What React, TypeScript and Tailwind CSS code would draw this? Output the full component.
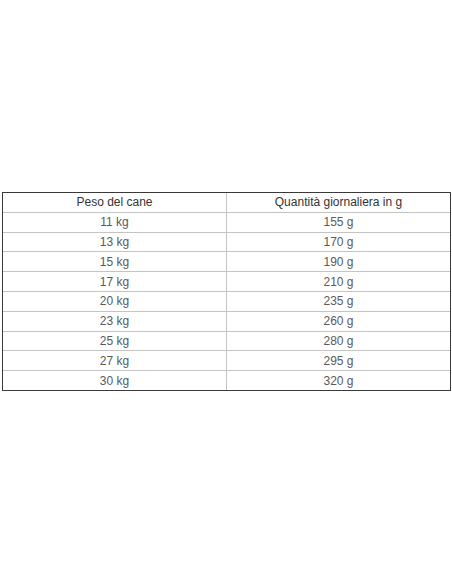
import React from "react";

const rows: [string, string][] = [
  ["11 kg", "155 g"],
  ["13 kg", "170 g"],
  ["15 kg", "190 g"],
  ["17 kg", "210 g"],
  ["20 kg", "235 g"],
  ["23 kg", "260 g"],
  ["25 kg", "280 g"],
  ["27 kg", "295 g"],
  ["30 kg", "320 g"],
];

export default function App() {
  return (
    <div
      className="w-[452px] h-[584px] bg-white pt-[192px]"
      style={{ fontFamily: '"Liberation Sans", Arial, sans-serif' }}
    >
      <div className="ml-[2px] w-[449px] border border-[#3a3a3a] text-[12px] leading-none">
        <div className="flex h-[19.8px] items-center border-b border-[#c4c4c4] text-[#333]">
          <div className="flex h-full w-[224px] items-center justify-center border-r border-[#c4c4c4]">
            Peso del cane
          </div>
          <div className="flex h-full flex-1 items-center justify-center">
            Quantità giornaliera in g
          </div>
        </div>
        {rows.map(([a, b], i) => (
          <div
            key={a}
            className={
              i < rows.length - 1
                ? "flex h-[19.8px] items-center border-b border-[#c4c4c4] text-[#5a5a5a]"
                : "flex h-[18.8px] items-center text-[#5a5a5a]"
            }
          >
            <div className="flex h-full w-[224px] items-center justify-center border-r border-[#c4c4c4]">
              {a}
            </div>
            <div className="flex h-full flex-1 items-center justify-center">{b}</div>
          </div>
        ))}
      </div>
    </div>
  );
}
